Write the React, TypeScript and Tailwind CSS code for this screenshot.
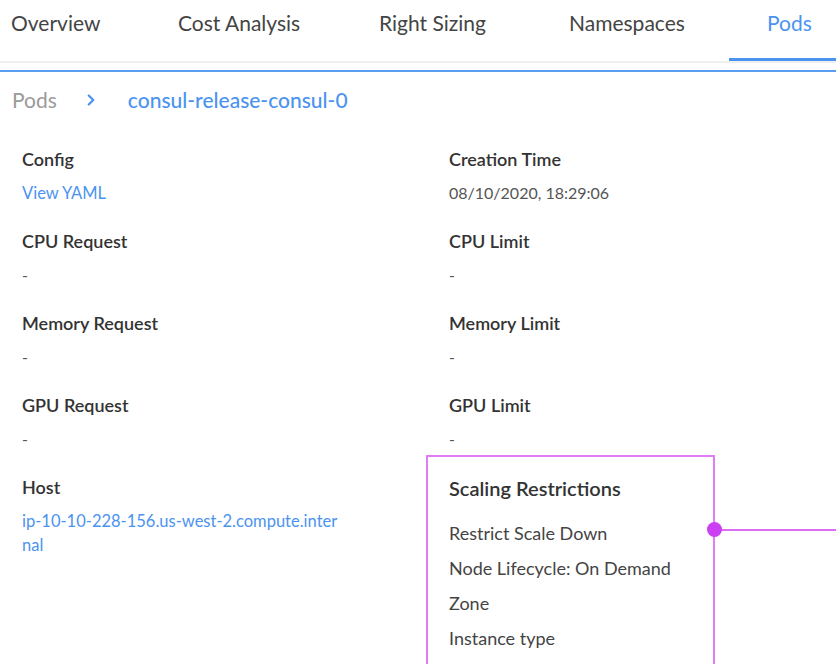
import { ChevronRight } from 'lucide-react'

const tabs = [
  { label: 'Overview', w: 'w-[167px]' },
  { label: 'Cost Analysis', w: 'w-[201px]' },
  { label: 'Right Sizing', w: 'w-[190px]' },
  { label: 'Namespaces', w: 'w-[198px]' },
  { label: 'Pods', w: 'w-[140px]', active: true },
]

function Field({ label, value, link }: { label: string; value: string; link?: boolean }) {
  return (
    <div className="flex flex-col">
      <div className="text-[18px] leading-6 font-semibold text-[#333]">{label}</div>
      <div
        className={
          link
            ? 'mt-[10px] text-[16.5px] leading-6 text-[#4b93f0] break-all'
            : 'mt-[10px] text-[16px] leading-6 text-[#555]'
        }
      >
        {value}
      </div>
    </div>
  )
}

export default function App() {
  return (
    <div className="w-[836px] h-[664px] overflow-hidden bg-white font-['Lato',sans-serif]">
      <div className="flex h-[63px] border-b-2 border-[#efefef] overflow-hidden">
        <div className="flex shrink-0 ml-[-27px]">
          {tabs.map((t) => (
            <div
              key={t.label}
              className={
                t.active
                  ? `${t.w} shrink-0 pl-[38px] pt-[10px] text-[21px] leading-[26px] text-[#4b93f0] border-b-[3px] border-[#4b93f0]`
                  : `${t.w} shrink-0 pl-[38px] pt-[10px] text-[21px] leading-[26px] text-[#444]`
              }
            >
              {t.label}
            </div>
          ))}
        </div>
      </div>
      <div className="mt-[7px] h-[2px] bg-[#5a9ef0]" />

      <div className="flex items-center h-[57px] pl-[12px] pb-[2px] text-[21px]">
        <span className="text-[#9a9a9a]">Pods</span>
        <ChevronRight className="ml-[25px] w-[18px] h-[18px] text-[#4b93f0]" strokeWidth={3} />
        <span className="ml-[28px] font-medium text-[#4b93f0]">consul-release-consul-0</span>
      </div>

      <div className="grid grid-cols-[427px_1fr] gap-y-[24px] pl-[22px] pt-[18px]">
        <Field label="Config" value="View YAML" link />
        <Field label="Creation Time" value="08/10/2020, 18:29:06" />
        <Field label="CPU Request" value="-" />
        <Field label="CPU Limit" value="-" />
        <Field label="Memory Request" value="-" />
        <Field label="Memory Limit" value="-" />
        <Field label="GPU Request" value="-" />
        <Field label="GPU Limit" value="-" />
        <div className="w-[320px]">
          <Field label="Host" value="ip-10-10-228-156.us-west-2.compute.internal" link />
        </div>
        <div className="relative ml-[-23px] mt-[-20px] w-[289px] h-[260px] border-2 border-[#e07cf6] pl-[21px] pt-[19px]">
          <div className="text-[20px] leading-6 font-semibold text-[#333]">Scaling Restrictions</div>
          <div className="mt-[21px] flex flex-col gap-[11px] text-[18px] leading-6 text-[#444]">
            <div>Restrict Scale Down</div>
            <div>Node Lifecycle: On Demand</div>
            <div>Zone</div>
            <div>Instance type</div>
          </div>
          <div className="absolute right-[-2px] top-[72px] w-[122px] h-[2px] translate-x-full bg-[#dc6cf5]" />
          <div className="absolute right-[-9px] top-[65px] w-[15px] h-[15px] rounded-full bg-[#cc3ef2]" />
        </div>
      </div>
    </div>
  )
}
